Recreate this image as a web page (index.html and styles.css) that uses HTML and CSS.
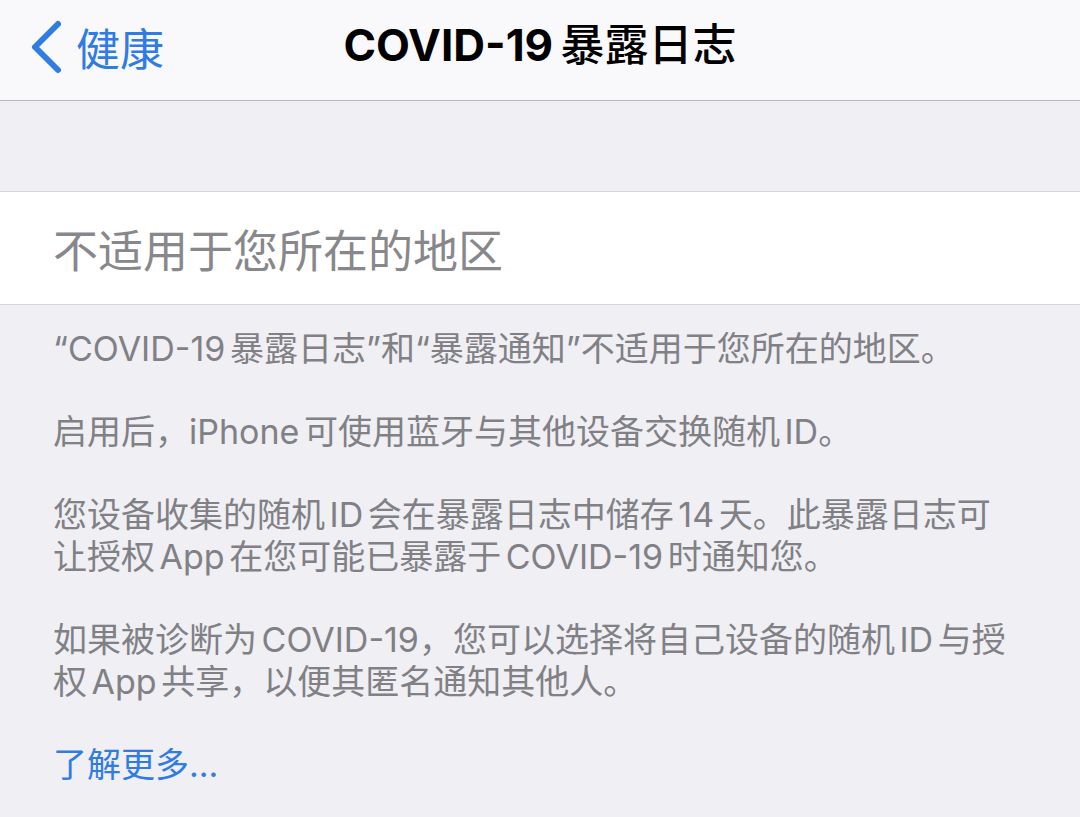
FILE: index.html
```html
<!DOCTYPE html>
<html lang="zh-CN">
<head>
  <meta charset="UTF-8" />
  <meta name="viewport" content="width=device-width, initial-scale=1.0"/>
  <title>COVID-19暴露日志</title>
  <link rel="stylesheet" href="styles.css">
</head>
<body>

  <nav class="navbar">
    <a class="back" href="#">
      <svg class="chevron" width="34" height="56" viewBox="0 0 34 56">
        <path d="M28 5 L5 28 L28 51" fill="none" stroke="currentColor" stroke-width="6" stroke-linecap="round" stroke-linejoin="round"/>
      </svg>
      <span>健康</span>
    </a>
    <div class="title">COVID-19 <span class="title-cn">暴露日志</span></div>
  </nav>

  <div class="spacer"></div>

  <div class="cell">不适用于您所在的地区</div>

  <div class="footer">
    <p>“COVID-19 暴露日志”和“暴露通知”不适用于您所在的地区。</p>
    <p>启用后，iPhone 可使用蓝牙与其他设备交换随机 ID。</p>
    <p>您设备收集的随机 ID 会在暴露日志中储存 14 天。此暴露日志可让授权 App 在您可能已暴露于 COVID-19 时通知您。</p>
    <p>如果被诊断为 COVID-19，您可以选择将自己设备的随机 ID 与授权 App 共享，以便其匿名通知其他人。</p>
    <a class="more" href="#">了解更多...</a>
  </div>

</body>
</html>
```

FILE: styles.css
```css
body {
  margin: 0;
  font-family: Inter, "Noto Sans CJK SC", sans-serif;
  background: #efeff4;
  height: 817px;
  overflow: hidden;
}
.navbar {
  position: relative;
  height: 100px;
  background: #f9f9fb;
  border-bottom: 1px solid #b8b8bc;
  display: flex;
  align-items: center;
  justify-content: center;
}
.back {
  position: absolute;
  left: 30px;
  top: 15px;
  display: flex;
  align-items: center;
  gap: 12px;
  color: #2f7ce3;
  text-decoration: none;
  font-size: 44px;
}
.chevron { display: block; }
.title {
  font-size: 44px;
  font-weight: 700;
  color: #000;
  margin-top: -16px;
  word-spacing: -3px;
}
.title-cn { font-weight: 500; }
.spacer {
  height: 90px;
}
.cell {
  background: #fff;
  border-top: 1px solid #d6d6da;
  border-bottom: 1px solid #d6d6da;
  height: 112px;
  display: flex;
  align-items: center;
  padding-left: 53px;
  font-size: 45px;
  color: #88888c;
}
.footer {
  padding: 23px 62px 0 53px;
  font-size: 34px;
  line-height: 42px;
  color: #808085;
  word-spacing: -5px;
}
.footer p {
  margin: 0 0 41px;
}
.more {
  display: block;
  color: #2f7ce3;
  text-decoration: none;
}
```
